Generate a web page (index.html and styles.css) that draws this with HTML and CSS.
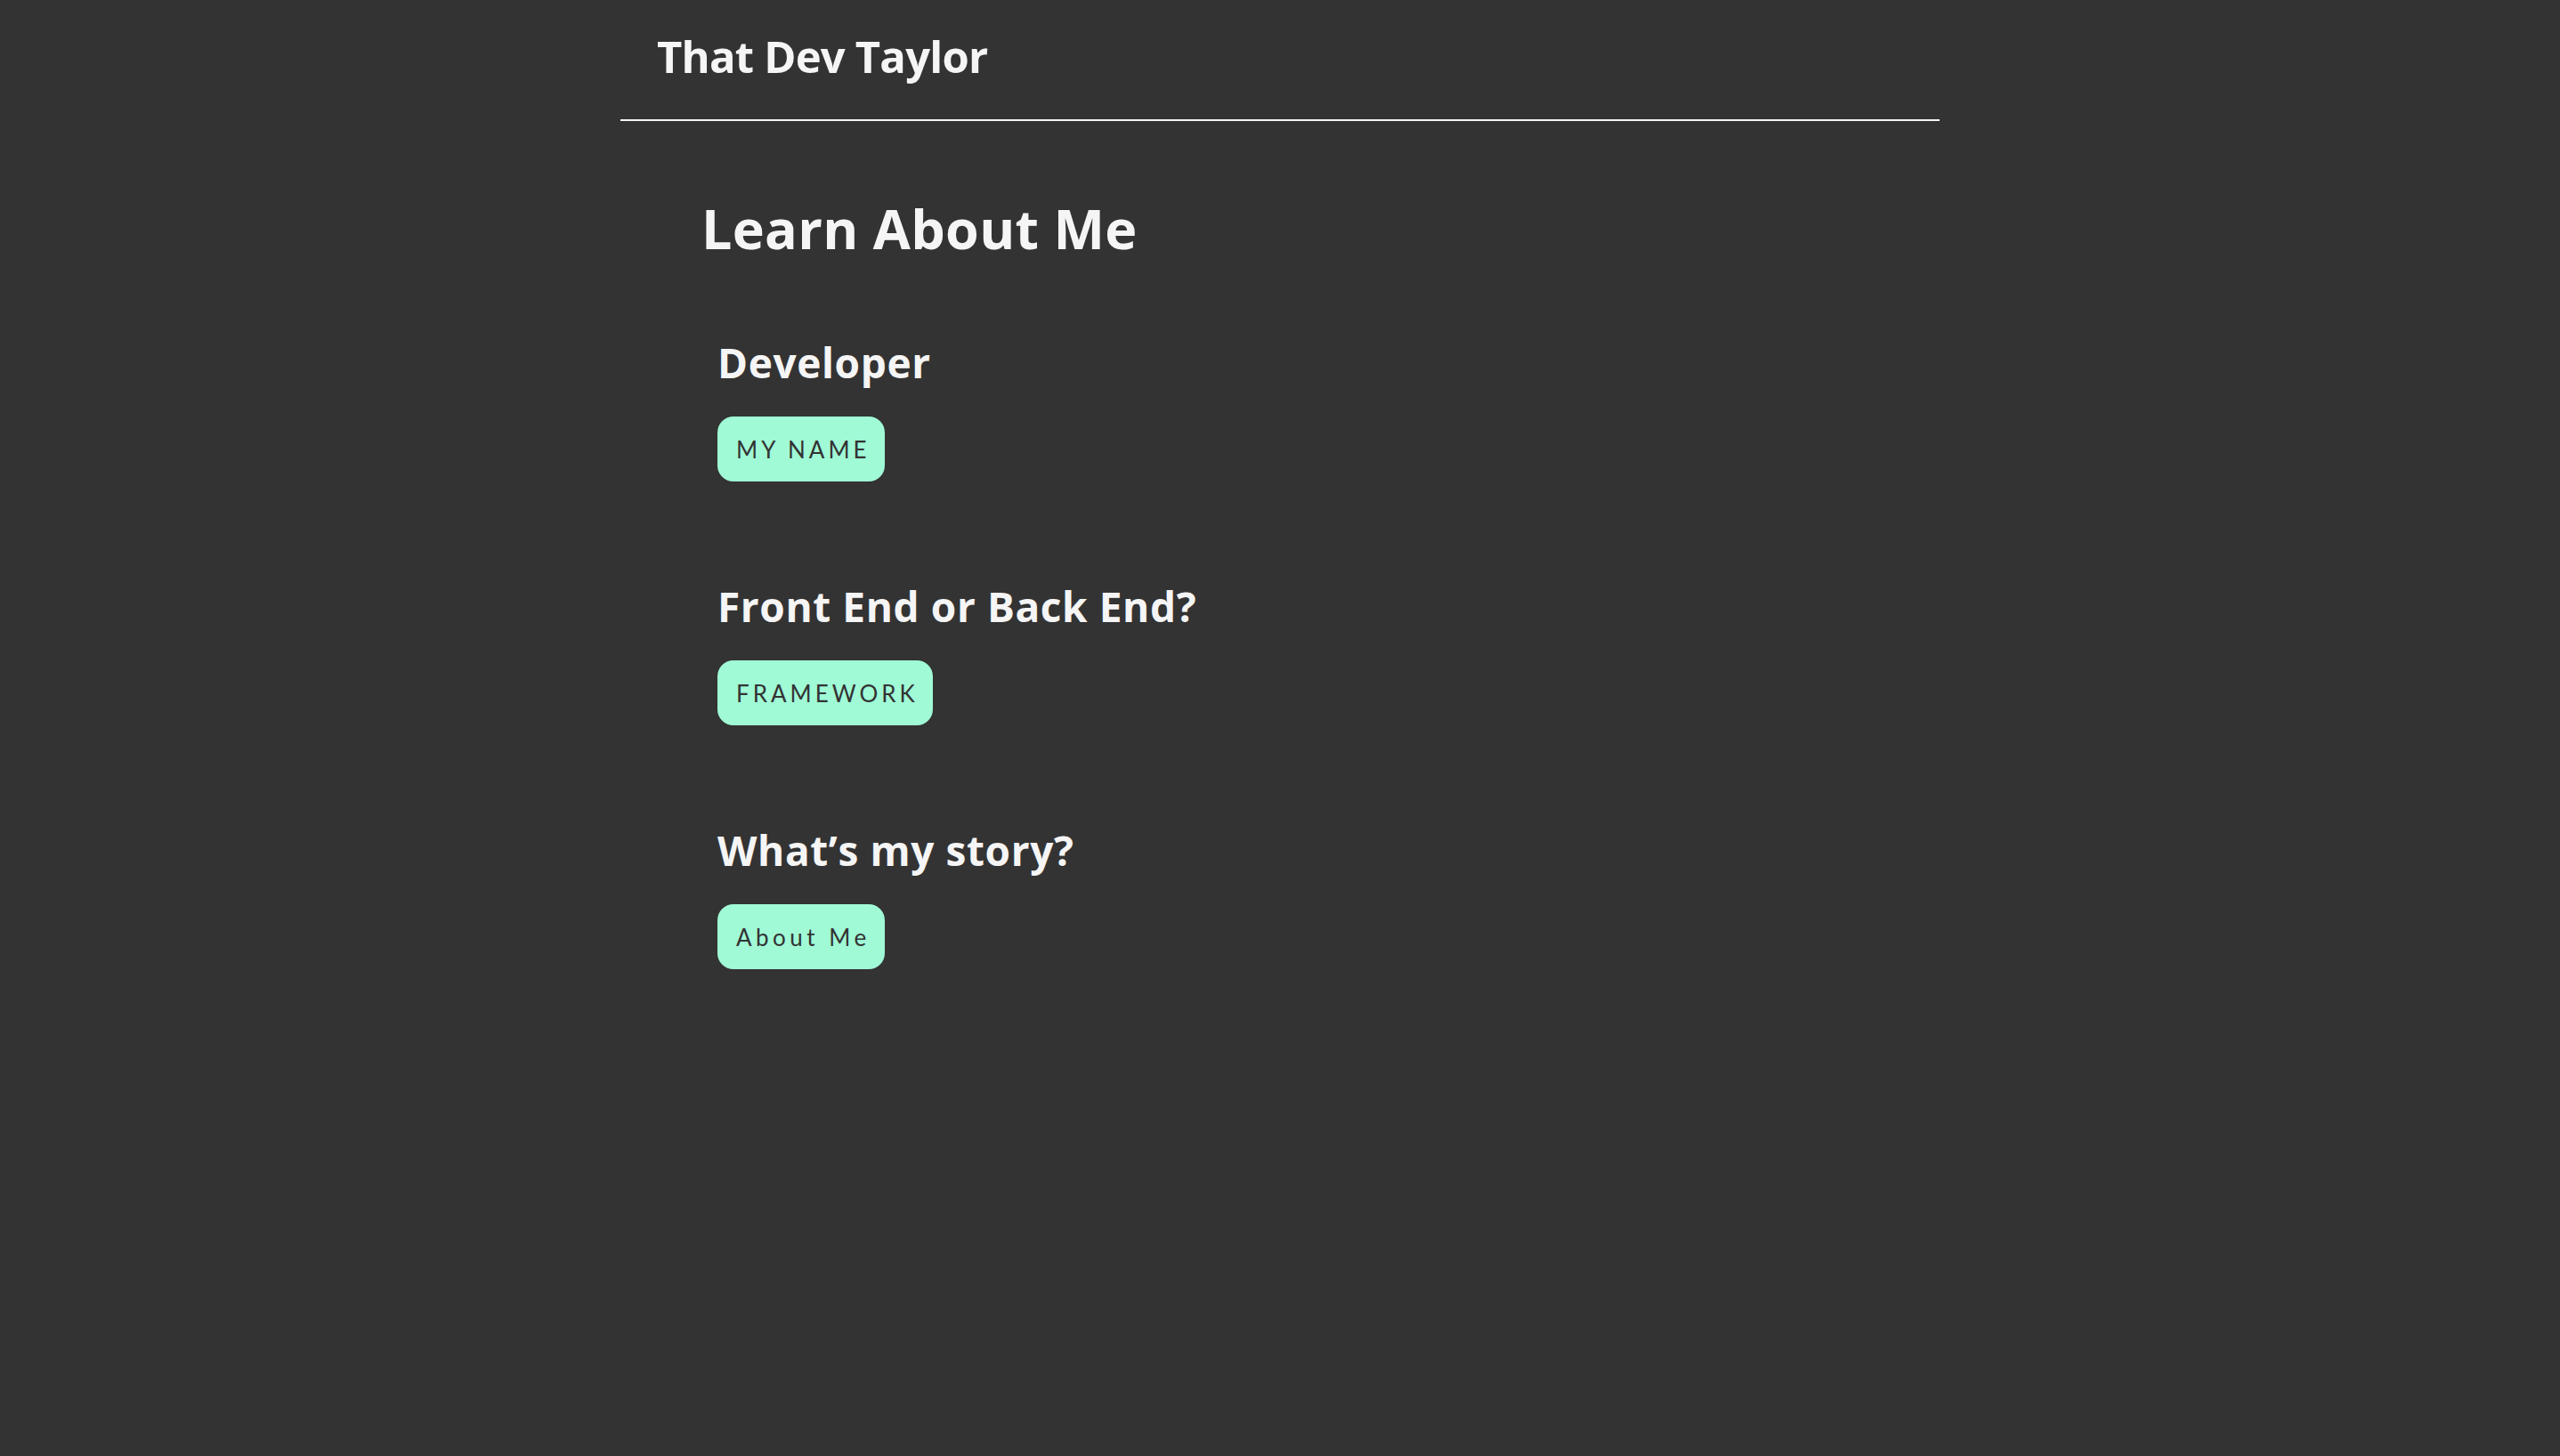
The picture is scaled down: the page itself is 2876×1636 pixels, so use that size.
FILE: index.html
```html
<!DOCTYPE html>
<html lang="en">
<head>
<meta charset="utf-8">
<title>That Dev Taylor</title>
<link rel="stylesheet" href="styles.css">
</head>
<body>
<div class="container">
  <header class="site-header">
    <h1 class="brand">That Dev Taylor</h1>
  </header>
  <main class="main">
    <h2 class="page-title">Learn About Me</h2>
    <section class="block">
      <h3 class="block-title">Developer</h3>
      <button class="pill upper">My Name</button>
    </section>
    <section class="block">
      <h3 class="block-title">Front End or Back End?</h3>
      <button class="pill upper">Framework</button>
    </section>
    <section class="block">
      <h3 class="block-title">What’s my story?</h3>
      <button class="pill">About Me</button>
    </section>
  </main>
</div>
</body>
</html>
```
FILE: styles.css
```css
html, body {
  margin: 0;
  padding: 0;
  background: #333333;
  min-height: 100%;
}
body {
  font-family: "Open Sans", Lato, sans-serif;
  color: #f5f5f5;
}
.container {
  width: 1482px;
  margin: 0 auto;
}
.site-header {
  padding: 39px 41px 46px;
  border-bottom: 2px solid #f5f5f5;
}
.brand {
  margin: 0;
  font-size: 49px;
  line-height: 1;
  font-weight: 700;
  letter-spacing: -0.8px;
}
.main {
  padding: 90px 0 0 91px;
}
.page-title {
  margin: 0 0 97px;
  font-size: 61px;
  line-height: 1;
  font-weight: 700;
  letter-spacing: 0.3px;
}
.block {
  padding-left: 18px;
  display: flex;
  flex-direction: column;
  align-items: flex-start;
  margin-bottom: 117px;
}
.block-title {
  margin: 0 0 38px;
  font-size: 46px;
  line-height: 1;
  font-weight: 700;
  letter-spacing: 0.6px;
}
.pill {
  height: 73px;
  padding: 0 16px 0 21px;
  border: none;
  border-radius: 18px;
  background: #a0fad6;
  color: #333333;
  font-family: Lato, "Noto Sans", sans-serif;
  font-size: 26px;
  font-weight: 400;
  letter-spacing: 4.5px;
  cursor: pointer;
}
.upper {
  text-transform: uppercase;
  letter-spacing: 4px;
}
```
